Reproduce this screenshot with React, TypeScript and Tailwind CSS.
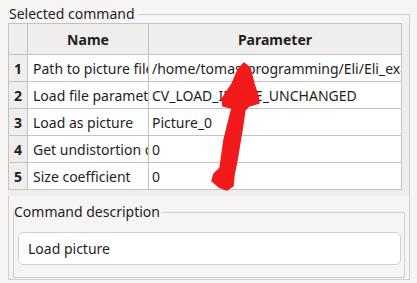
import React from "react";

type Row = { name: string; value: string };

const rows: Row[] = [
  { name: "Path to picture file", value: "/home/tomas/programming/Eli/Eli_examples/pictures/picture.png" },
  { name: "Load file parameters", value: "CV_LOAD_IMAGE_UNCHANGED" },
  { name: "Load as picture", value: "Picture_0" },
  { name: "Get undistortion coefficients", value: "0" },
  { name: "Size coefficient", value: "0" },
];

const cell = "border-r border-b border-[#c3c2c0] overflow-hidden whitespace-nowrap";

const App = () => {
  return (
    <div
      className="relative w-[417px] h-[283px] overflow-hidden bg-[#f6f5f4] text-[14px] text-[#1e1e1e] pt-[14px] pl-[8px]"
      style={{ fontFamily: '"Noto Sans", sans-serif' }}
    >
      {/* Selected command group */}
      <div className="w-[402px] h-[266px] border border-[#d3cec9] flex flex-col">
        <div className="-mt-[10px] -ml-px w-fit h-[18px] leading-[18px] bg-[#f6f5f4] pl-px pr-[2px]">
          Selected command
        </div>

        {/* table */}
        <div className="-ml-px w-[401px] h-[173px] bg-[#efeeec] shrink-0">
          <div className="flex w-fit border-t border-l border-[#c3c2c0]">
            <div className={`${cell} w-[19px] h-[31px] bg-[#efeeec]`} />
            <div className={`${cell} w-[121px] h-[31px] bg-[#efeeec] font-bold flex items-center justify-center`}>
              Name
            </div>
            <div className={`${cell} w-[253px] h-[31px] bg-[#efeeec] font-bold flex items-center justify-center`}>
              Parameter
            </div>
          </div>
          {rows.map((r, i) => (
            <div key={i} className="flex w-fit border-l border-[#c3c2c0]">
              <div className={`${cell} w-[19px] h-[27px] bg-[#efeeec] font-bold flex items-center justify-center`}>
                {i + 1}
              </div>
              <div className={`${cell} w-[121px] h-[27px] bg-white flex items-center pl-[5px]`}>
                {r.name}
              </div>
              <div className={`${cell} w-[253px] h-[27px] bg-white flex items-center pl-[3px]`}>
                {r.value}
              </div>
            </div>
          ))}
        </div>

        {/* Command description group */}
        <div className="mt-[16px] ml-[4px] w-[392px] h-[66px] border border-[#d3cec9]">
          <div className="-mt-[10px] w-fit h-[18px] leading-[18px] bg-[#f6f5f4] pr-[2px]">
            Command description
          </div>
          <div className="mt-[11px] ml-[4px] w-[383px] h-[33px] rounded-[5px] border border-[#d3cec9] bg-white flex items-center pl-[9px]">
            Load picture
          </div>
        </div>
      </div>

      {/* hand-drawn red arrow */}
      <svg className="absolute left-0 top-0 pointer-events-none" width="417" height="283" viewBox="0 0 417 283">
        <path
          d="M 244 63 L 250 68 L 254 84 L 258 96 L 259 103 L 249 106 L 245 110 L 242 130 L 237 160 L 234 175 L 233 186 L 227 190 L 219 187 L 212 181 L 214 174 L 220 168 L 224 140 L 229 120 L 232 108 L 223 106 L 222 99 L 232 84 L 238 70 Z"
          fill="#f21a1a"
          stroke="#f21a1a"
          strokeWidth="1.5"
          strokeLinejoin="round"
        />
      </svg>
    </div>
  );
};

export default App;
